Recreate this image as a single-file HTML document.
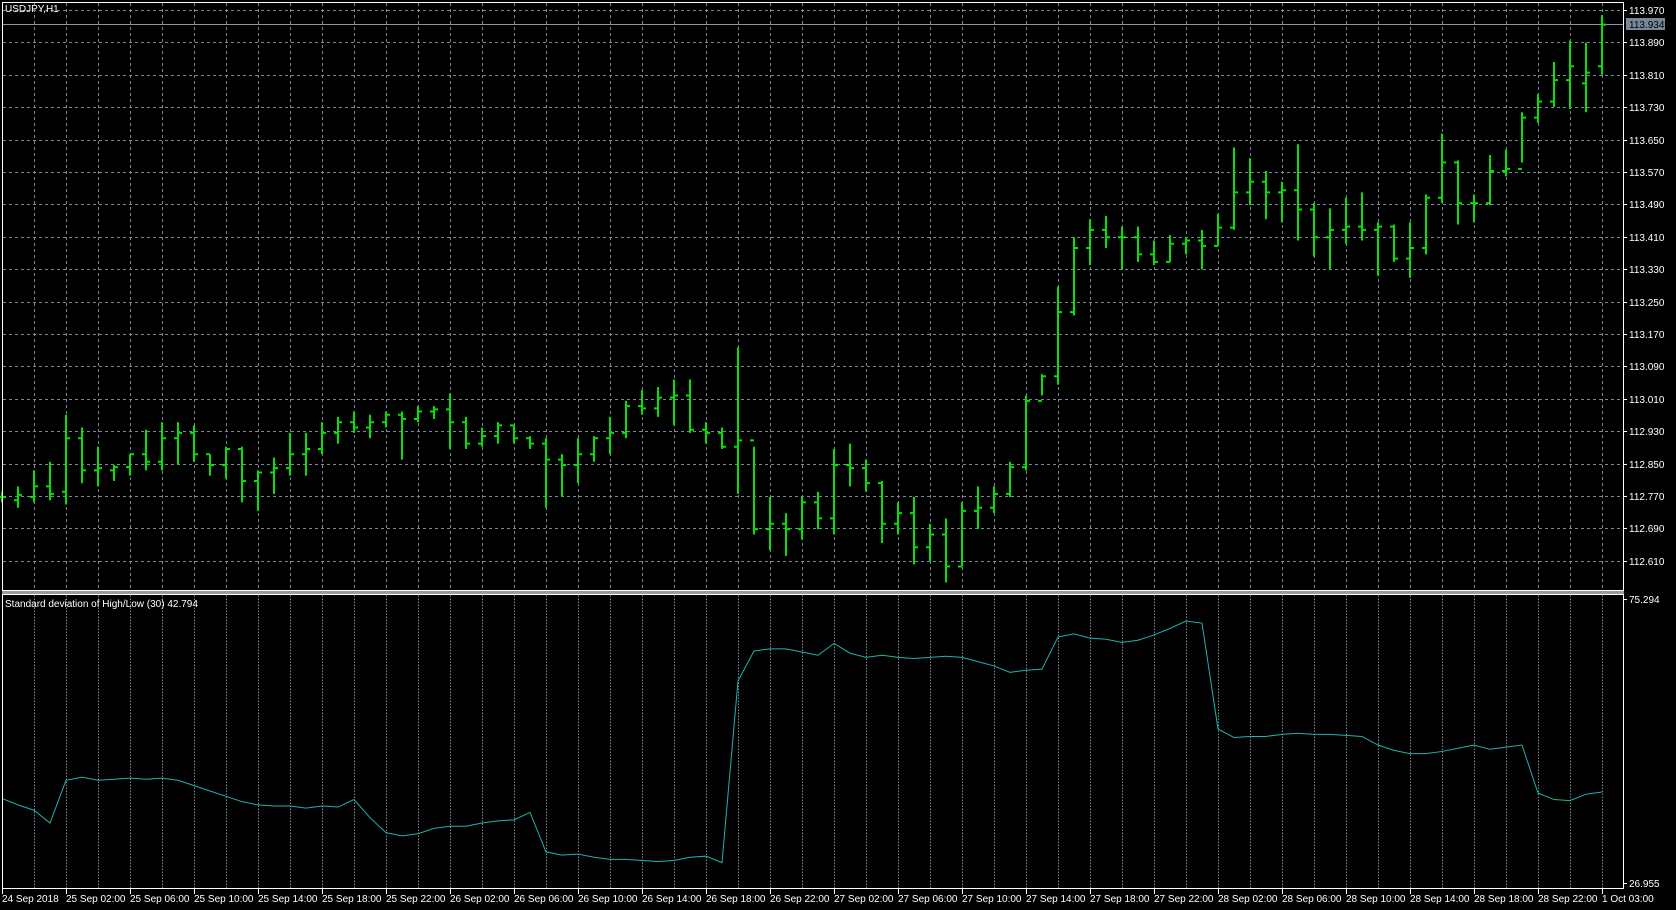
<!DOCTYPE html>
<html><head><meta charset="utf-8"><style>
html,body{margin:0;padding:0;background:#000;width:1676px;height:910px;overflow:hidden}
svg text{font-family:"Liberation Sans",sans-serif;font-size:10px;fill:#fff}
</style></head><body>
<svg width="1676" height="910" viewBox="0 0 1676 910" xmlns="http://www.w3.org/2000/svg">
<rect width="1676" height="910" fill="#000"/>
<g stroke="#778899" stroke-width="1" stroke-dasharray="3,3" fill="none">
<path id="vg" d="M34.5 3V591M66.5 3V591M98.5 3V591M130.5 3V591M162.5 3V591M194.5 3V591M226.5 3V591M258.5 3V591M290.5 3V591M322.5 3V591M354.5 3V591M386.5 3V591M418.5 3V591M450.5 3V591M482.5 3V591M514.5 3V591M546.5 3V591M578.5 3V591M610.5 3V591M642.5 3V591M674.5 3V591M706.5 3V591M738.5 3V591M770.5 3V591M802.5 3V591M834.5 3V591M866.5 3V591M898.5 3V591M930.5 3V591M962.5 3V591M994.5 3V591M1026.5 3V591M1058.5 3V591M1090.5 3V591M1122.5 3V591M1154.5 3V591M1186.5 3V591M1218.5 3V591M1250.5 3V591M1282.5 3V591M1314.5 3V591M1346.5 3V591M1378.5 3V591M1410.5 3V591M1442.5 3V591M1474.5 3V591M1506.5 3V591M1538.5 3V591M1570.5 3V591M1602.5 3V591"/>
<use href="#vg" transform="translate(0,594) scale(1,0.5)"/>
<path d="M3 10.5H1623M3 42.5H1623M3 75.5H1623M3 107.5H1623M3 140.5H1623M3 172.5H1623M3 204.5H1623M3 237.5H1623M3 269.5H1623M3 302.5H1623M3 334.5H1623M3 366.5H1623M3 399.5H1623M3 431.5H1623M3 464.5H1623M3 496.5H1623M3 528.5H1623M3 561.5H1623"/>
</g>
<line x1="3" y1="24.5" x2="1623" y2="24.5" stroke="#8a96a2" stroke-width="1"/>
<g transform="scale(1,1.0689)">
<path fill="none" stroke="#00e400" stroke-width="2" vector-effect="non-scaling-stroke" d="
M2 460V470M-2 465H2M2 465H6
M18 455V475M14 468H18M18 463H22
M34 440V470M30 465H34M34 455H38
M50 432V468M46 455H50M50 462H54
M66 388V472M62 460H66M66 410H70
M82 400V452M78 410H82M82 440H86
M98 418V455M94 440H98M98 438H102
M114 435V450M110 440H114M114 437H118
M130 425V445M126 437H130M130 425H134
M146 402V440M142 425H146M146 432H150
M162 395V440M158 432H162M162 410H166
M178 395V435M174 410H178M178 405H182
M194 398V432M190 405H194M194 425H198
M210 425V445M206 425H210M210 435H214
M226 418V448M222 435H226M226 420H230
M242 418V470M238 420H242M242 450H246
M258 440V478M254 450H258M258 442H262
M274 428V462M270 442H274M274 438H278
M290 405V445M286 438H290M290 425H294
M306 405V445M302 425H306M306 420H310
M322 395V425M318 420H322M322 405H326
M338 390V415M334 405H338M338 395H342
M354 385V405M350 395H354M354 400H358
M370 388V410M366 400H370M370 395H374
M386 385V400M382 395H386M386 388H390
M402 385V430M398 388H402M402 392H406
M418 380V395M414 392H418M418 385H422
M434 380V392M430 385H434M434 383H438
M450 368V420M446 383H450M450 395H454
M466 390V420M462 395H466M466 415H470
M482 400V418M478 415H482M482 408H486
M498 395V415M494 408H498M498 398H502
M514 398V415M510 398H514M514 410H518
M530 408V420M526 410H530M530 415H534
M546 410V475M542 415H546M546 430H550
M562 425V465M558 430H562M562 435H566
M578 410V452M574 435H578M578 425H582
M594 408V432M590 425H594M594 410H598
M610 390V425M606 410H610M610 405H614
M626 375V410M622 405H626M626 380H630
M642 365V388M638 380H642M642 382H646
M658 362V390M654 382H658M658 372H662
M674 355V398M670 372H674M674 370H678
M690 355V405M686 370H690M690 402H694
M706 395V415M702 402H706M706 405H710
M722 400V420M718 405H722M722 418H726
M738 325V462M734 418H738M738 412H742
M754 418V500M750 412H754M754 495H758
M770 465V515M766 495H770M770 490H774
M786 480V520M782 490H786M786 495H790
M802 465V505M798 495H802M802 470H806
M818 460V495M814 470H818M818 485H822
M834 420V500M830 485H834M834 435H838
M850 415V455M846 435H850M850 438H854
M866 430V460M862 438H866M866 452H870
M882 450V508M878 452H882M882 490H886
M898 470V500M894 490H898M898 480H902
M914 465V528M910 480H914M914 512H918
M930 490V525M926 512H930M930 500H934
M946 485V545M942 500H946M946 530H950
M962 470V530M958 530H962M962 478H966
M978 455V495M974 478H978M978 475H982
M994 455V480M990 475H994M994 462H998
M1010 432V465M1006 462H1010M1010 437H1014
M1026 370V440M1022 437H1026M1026 375H1030
M1042 350V370M1038 375H1042M1042 352H1046
M1058 268V360M1054 352H1058M1058 292H1062
M1074 222V295M1070 292H1074M1074 232H1078
M1090 205V248M1086 232H1090M1090 215H1094
M1106 202V232M1102 215H1106M1106 222H1110
M1122 212V252M1118 222H1122M1122 222H1126
M1138 212V245M1134 222H1138M1138 238H1142
M1154 225V248M1150 238H1154M1154 245H1158
M1170 220V245M1166 245H1170M1170 228H1174
M1186 222V238M1182 228H1186M1186 225H1190
M1202 215V252M1198 225H1202M1202 230H1206
M1218 200V230M1214 230H1218M1218 213H1222
M1234 138V215M1230 213H1234M1234 180H1238
M1250 148V192M1246 180H1250M1250 170H1254
M1266 160V205M1262 170H1266M1266 180H1270
M1282 170V208M1278 180H1282M1282 178H1286
M1298 135V225M1294 178H1298M1298 196H1302
M1314 190V240M1310 196H1314M1314 222H1318
M1330 195V252M1326 222H1330M1330 215H1334
M1346 185V228M1342 215H1346M1346 212H1350
M1362 180V225M1358 212H1362M1362 215H1366
M1378 208V258M1374 215H1378M1378 212H1382
M1394 210V245M1390 212H1394M1394 242H1398
M1410 208V260M1406 242H1410M1410 232H1414
M1426 182V238M1422 232H1426M1426 185H1430
M1442 125V190M1438 185H1442M1442 152H1446
M1458 150V210M1454 152H1458M1458 190H1462
M1474 182V208M1470 190H1474M1474 190H1478
M1490 145V192M1486 190H1490M1490 160H1494
M1506 140V165M1502 160H1506M1506 158H1510
M1522 105V152M1518 158H1522M1522 110H1526
M1538 88V115M1534 110H1538M1538 95H1542
M1554 58V100M1550 95H1554M1554 75H1558
M1570 38V102M1566 75H1570M1570 62H1574
M1586 40V105M1582 78H1586M1586 68H1590
M1602 14V70M1598 62H1602M1602 23H1606"/>
<polyline fill="none" stroke="#20b2aa" stroke-width="1" vector-effect="non-scaling-stroke" points="2,747 18,753 34,758 50,770 66,730 82,727 98,730 114,729 130,728 146,729 162,728 178,730 194,735 210,740 226,745 242,750 258,753 274,754 290,754 306,756 322,754 338,755 354,748 370,765 386,779 402,782 418,780 434,775 450,773 466,773 482,770 498,768 514,767 530,760 546,797 562,800 578,799 594,802 610,804 626,804 642,805 658,806 674,805 690,802 706,801 722,807 738,637 754,609 770,607 786,607 802,610 818,613 834,602 850,611 866,615 882,613 898,615 914,616 930,615 946,614 962,615 978,619 994,623 1010,629 1026,627 1042,626 1058,596 1074,593 1090,597 1106,598 1122,601 1138,599 1154,594 1170,588 1186,581 1202,583 1218,682 1234,690 1250,689 1266,689 1282,687 1298,686 1314,687 1330,687 1346,688 1362,689 1378,697 1394,702 1410,705 1426,705 1442,703 1458,700 1474,697 1490,701 1506,699 1522,697 1538,742 1554,748 1570,749 1586,743 1602,741"/>
</g>
<g fill="none" stroke="#fff" stroke-width="1">
<rect x="2.5" y="2.5" width="1621" height="588"/>
<rect x="2.5" y="594.5" width="1621" height="294"/>
</g>
<rect x="2" y="591" width="1622" height="3" fill="#9a9a9a"/>
<text x="5" y="12">USDJPY,H1</text>
<text x="5" y="607">Standard deviation of High/Low (30) 42.794</text>
<g stroke="#fff" stroke-width="1">
<path d="M1623 10.5h4M1623 42.5h4M1623 75.5h4M1623 107.5h4M1623 140.5h4M1623 172.5h4M1623 204.5h4M1623 237.5h4M1623 269.5h4M1623 302.5h4M1623 334.5h4M1623 366.5h4M1623 399.5h4M1623 431.5h4M1623 464.5h4M1623 496.5h4M1623 528.5h4M1623 561.5h4M1623 599.5h4M1623 883.5h4"/>
<path d="M2.5 889V894M66.5 889V894M130.5 889V894M194.5 889V894M258.5 889V894M322.5 889V894M386.5 889V894M450.5 889V894M514.5 889V894M578.5 889V894M642.5 889V894M706.5 889V894M770.5 889V894M834.5 889V894M898.5 889V894M962.5 889V894M1026.5 889V894M1090.5 889V894M1154.5 889V894M1218.5 889V894M1282.5 889V894M1346.5 889V894M1410.5 889V894M1474.5 889V894M1538.5 889V894M1602.5 889V894"/>
</g>
<rect x="1626" y="18" width="39" height="12" fill="#778899"/>
<g>
<text x="1629" y="14">113.970</text>
<text x="1629" y="28" style="fill:#000">113.934</text>
<text x="1629" y="46">113.890</text>
<text x="1629" y="79">113.810</text>
<text x="1629" y="111">113.730</text>
<text x="1629" y="144">113.650</text>
<text x="1629" y="176">113.570</text>
<text x="1629" y="208">113.490</text>
<text x="1629" y="241">113.410</text>
<text x="1629" y="273">113.330</text>
<text x="1629" y="306">113.250</text>
<text x="1629" y="338">113.170</text>
<text x="1629" y="370">113.090</text>
<text x="1629" y="403">113.010</text>
<text x="1629" y="435">112.930</text>
<text x="1629" y="468">112.850</text>
<text x="1629" y="500">112.770</text>
<text x="1629" y="532">112.690</text>
<text x="1629" y="565">112.610</text>
<text x="1629" y="603">75.294</text>
<text x="1629" y="887">26.955</text>
</g>
<g>
<text x="2" y="902">24 Sep 2018</text>
<text x="66" y="902">25 Sep 02:00</text>
<text x="130" y="902">25 Sep 06:00</text>
<text x="194" y="902">25 Sep 10:00</text>
<text x="258" y="902">25 Sep 14:00</text>
<text x="322" y="902">25 Sep 18:00</text>
<text x="386" y="902">25 Sep 22:00</text>
<text x="450" y="902">26 Sep 02:00</text>
<text x="514" y="902">26 Sep 06:00</text>
<text x="578" y="902">26 Sep 10:00</text>
<text x="642" y="902">26 Sep 14:00</text>
<text x="706" y="902">26 Sep 18:00</text>
<text x="770" y="902">26 Sep 22:00</text>
<text x="834" y="902">27 Sep 02:00</text>
<text x="898" y="902">27 Sep 06:00</text>
<text x="962" y="902">27 Sep 10:00</text>
<text x="1026" y="902">27 Sep 14:00</text>
<text x="1090" y="902">27 Sep 18:00</text>
<text x="1154" y="902">27 Sep 22:00</text>
<text x="1218" y="902">28 Sep 02:00</text>
<text x="1282" y="902">28 Sep 06:00</text>
<text x="1346" y="902">28 Sep 10:00</text>
<text x="1410" y="902">28 Sep 14:00</text>
<text x="1474" y="902">28 Sep 18:00</text>
<text x="1538" y="902">28 Sep 22:00</text>
<text x="1602" y="902">1 Oct 03:00</text>
</g>
</svg>
</body></html>
